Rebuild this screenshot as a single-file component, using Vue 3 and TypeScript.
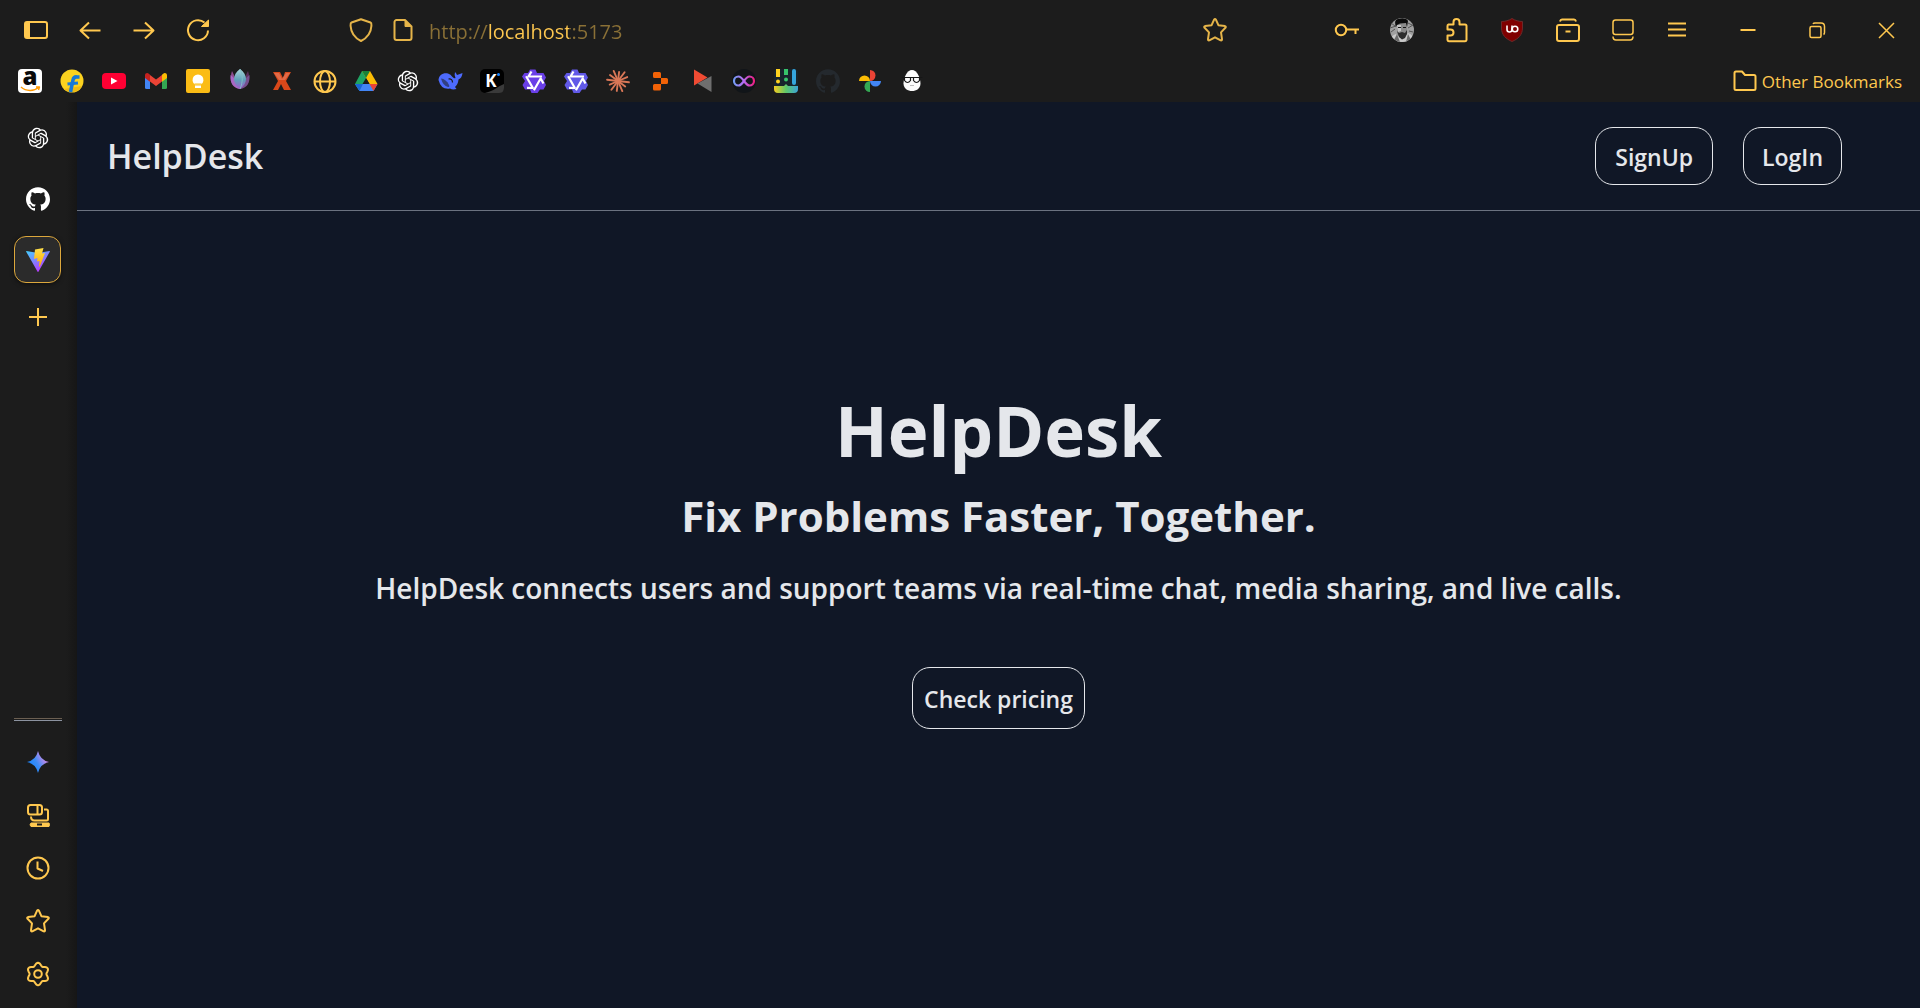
<script setup lang="ts">
import { ref } from 'vue'

const address = ref('http://localhost:5173')

const openAiPath =
  'M22.2819 9.8211a5.9847 5.9847 0 0 0-.5157-4.9108 6.0462 6.0462 0 0 0-6.5098-2.9A6.0651 6.0651 0 0 0 4.9807 4.1818a5.9847 5.9847 0 0 0-3.9977 2.9 6.0462 6.0462 0 0 0 .7427 7.0966 5.98 5.98 0 0 0 .511 4.9107 6.051 6.051 0 0 0 6.5146 2.9001A5.9847 5.9847 0 0 0 13.2599 24a6.0557 6.0557 0 0 0 5.7718-4.2058 5.9894 5.9894 0 0 0 3.9977-2.9001 6.0557 6.0557 0 0 0-.7475-7.0729zm-9.022 12.6081a4.4755 4.4755 0 0 1-2.8764-1.0408l.1419-.0804 4.7783-2.7582a.7948.7948 0 0 0 .3927-.6813v-6.7369l2.02 1.1686a.071.071 0 0 1 .038.052v5.5826a4.504 4.504 0 0 1-4.4945 4.4944zm-9.6607-4.1254a4.4708 4.4708 0 0 1-.5346-3.0137l.142.0852 4.783 2.7582a.7712.7712 0 0 0 .7806 0l5.8428-3.3685v2.3324a.0804.0804 0 0 1-.0332.0615L9.74 19.9502a4.4992 4.4992 0 0 1-6.1408-1.6464zM2.3408 7.8956a4.485 4.485 0 0 1 2.3655-1.9728V11.6a.7664.7664 0 0 0 .3879.6765l5.8144 3.3543-2.0201 1.1685a.0757.0757 0 0 1-.071 0l-4.8303-2.7865A4.504 4.504 0 0 1 2.3408 7.872zm16.5963 3.8558L13.1038 8.364 15.1192 7.2a.0757.0757 0 0 1 .071 0l4.8303 2.7913a4.4944 4.4944 0 0 1-.6765 8.1042v-5.6772a.79.79 0 0 0-.407-.667zm2.0107-3.0231l-.142-.0852-4.7735-2.7818a.7759.7759 0 0 0-.7854 0L9.409 9.2297V6.8974a.0662.0662 0 0 1 .0284-.0615l4.8303-2.7866a4.4992 4.4992 0 0 1 6.6802 4.66zM8.3065 12.863l-2.02-1.1638a.0804.0804 0 0 1-.038-.0567V6.0742a4.4992 4.4992 0 0 1 7.3757-3.4537l-.142.0805L8.704 5.459a.7948.7948 0 0 0-.3927.6813zm1.0976-2.3654l2.602-1.4998 2.6069 1.4998v2.9994l-2.5974 1.4997-2.6067-1.4997Z'
const gitHubPath =
  'M12 .297c-6.63 0-12 5.373-12 12 0 5.303 3.438 9.8 8.205 11.385.6.113.82-.258.82-.577 0-.285-.01-1.04-.015-2.04-3.338.724-4.042-1.61-4.042-1.61C4.422 18.07 3.633 17.7 3.633 17.7c-1.087-.744.084-.729.084-.729 1.205.084 1.838 1.236 1.838 1.236 1.07 1.835 2.809 1.305 3.495.998.108-.776.417-1.305.76-1.605-2.665-.3-5.466-1.332-5.466-5.93 0-1.31.465-2.38 1.235-3.22-.135-.303-.54-1.523.105-3.176 0 0 1.005-.322 3.3 1.23.96-.267 1.98-.399 3-.405 1.02.006 2.04.138 3 .405 2.28-1.552 3.285-1.23 3.285-1.23.645 1.653.24 2.873.12 3.176.765.84 1.23 1.91 1.23 3.22 0 4.61-2.805 5.625-5.475 5.92.42.36.81 1.096.81 2.22 0 1.606-.015 2.896-.015 3.286 0 .315.21.69.825.57C20.565 22.092 24 17.592 24 12.297c0-6.627-5.373-12-12-12'
const starPath =
  'M11.1 1.6Q12 .4 12.9 1.6L15.4 7.2 22 8.1Q23.4 8.5 22.4 9.8L18 14.4 19 21.2Q19.1 22.7 17.7 22.3L12 19.3 6.3 22.3Q4.9 22.7 5 21.2L6 14.4 1.6 9.8Q.6 8.5 2 8.1L8.6 7.2Z'

/* Six-lobed outline of the settings cog */
const cogPath =
  Array.from({ length: 72 }, (_, i) => {
    const angle = (i / 72) * Math.PI * 2
    const radius = 9.8 + 1.4 * Math.cos(angle * 6)
    const x = 12 + radius * Math.sin(angle)
    const y = 12 - radius * Math.cos(angle)
    return `${i === 0 ? 'M' : 'L'}${x.toFixed(2)} ${y.toFixed(2)}`
  }).join('') + 'Z'

/* Rays of the sunburst bookmark */
const rays = [11, 9, 11, 10, 11, 9, 11, 10, 11, 9, 11, 10].map((length, i) => {
  const angle = (i / 12) * Math.PI * 2 + 0.12
  return { x: 12 + length * Math.cos(angle), y: 12 + length * Math.sin(angle) }
})
</script>

<template>
  <div class="browser">
    <header class="chrome">
      <div class="toolbar">
        <nav class="group nav-group" aria-label="Navigation">
          <button class="icon" aria-label="Toggle sidebar">
            <svg viewBox="0 0 24 24"><rect x="1" y="4" width="22" height="16" rx="2" /><path d="M1.500 5h4v14h-4z" class="solid" /></svg>
          </button>
          <button class="icon" aria-label="Back">
            <svg viewBox="0 0 24 24"><path d="M22.500 12.500H2.500M11 4.500l-8.500 8 8.500 8" /></svg>
          </button>
          <button class="icon" aria-label="Forward">
            <svg viewBox="0 0 24 24"><path d="M1.500 12.500h20M13 4.500l8.500 8-8.500 8" /></svg>
          </button>
          <button class="icon" aria-label="Reload">
            <svg viewBox="0 0 24 24"><path d="M22 12.500A10 10 0 1 1 18.500 4.600" /><path d="M22.500 2v6.500h-7z" class="solid" /></svg>
          </button>
        </nav>

        <div class="address">
          <div class="group site-group">
            <button class="icon" aria-label="Tracking protection">
              <svg viewBox="0 0 24 24" class="soft"><path d="M12 1.200L21.500 4.500C22.700 5 22.500 6 22.400 8 22 15 18 20 12 23 6 20 2 15 1.600 8 1.500 6 1.300 5 2.500 4.500Z" /></svg>
            </button>
            <button class="icon" aria-label="Site information">
              <svg viewBox="0 0 24 24" class="soft"><path d="M5.500 2H14l6.500 6.500V20a2 2 0 0 1-2 2H5.500a2 2 0 0 1-2-2V4a2 2 0 0 1 2-2z" /><path d="M14 2v6.500h6.500z" class="solid" /></svg>
            </button>
          </div>
          <input v-model="address" class="url" type="text" aria-label="Address" spellcheck="false" />
          <button class="icon" aria-label="Bookmark this page">
            <svg viewBox="0 0 24 24" class="soft"><path :d="starPath" /></svg>
          </button>
        </div>

        <div class="group tool-group">
          <button class="icon" aria-label="Passwords">
            <svg viewBox="0 0 24 24"><circle cx="6" cy="12" r="5.200" /><path d="M11.200 11.500H24M20.500 11.500v4.500" /></svg>
          </button>
          <button class="icon" aria-label="Account">
            <svg viewBox="0 0 24 24" class="plain">
              <clipPath id="avatar"><circle cx="12" cy="12" r="12" /></clipPath>
              <g clip-path="url(#avatar)">
                <rect width="24" height="24" fill="#a0a0a0" />
                <path d="M1 5l4 3M0 10l6-2M1 14l4-3M18 5l4 2M18 10l5-3M19 13l4 1" stroke="#555" />
                <path d="M0 24c0-5 3-7 6-8l6 5 6-6c3 1 6 3 6 9z" fill="#c9c9c9" />
                <path d="M3 24l4-8 3 8zM16 24l2-8 3 6z" fill="#6b6b6b" />
                <path d="M7 5h10v8c0 4-2 7-5 7s-5-3-5-7z" fill="#8b8b8b" />
                <path d="M7 7h4v6l-3 1z" fill="#c4c4c4" />
                <path d="M6 9C5 6 4 2 8 1c4-1.500 9-1 10 2l-1 6-1-4-6 .5L7 7z" fill="#0b0b0b" />
                <path d="M7 13l2 2 3-1 3 1 2-3v4l-2 4-3 1.500L9 19z" fill="#2e2e2e" />
                <path d="M8 9.500h3M13 9.500h3" stroke="#161616" />
              </g>
            </svg>
          </button>
          <button class="icon" aria-label="Extensions">
            <svg viewBox="0 0 24 24"><path d="M3.500 6.500H8.500V4a3 3 0 0 1 6 0V6.500H20a1.500 1.500 0 0 1 1.500 1.500V22A1.500 1.500 0 0 1 20 23.200H4A1.500 1.500 0 0 1 2.500 22V17.500H5.500a3 3 0 0 0 0-6H2.500V8a1.500 1.500 0 0 1 1-1.500z" /></svg>
          </button>
          <button class="icon" aria-label="uBlock Origin">
            <svg viewBox="0 0 24 24" class="plain">
              <path d="M12 .500C15 2.500 19 3.500 22.500 3.500V10C22.500 17 18 21 12 23.500 6 21 1.500 17 1.500 10V3.500C5 3.500 9 2.500 12 .500Z" fill="#800000" stroke="#6b2a2a" />
              <path d="M7 7.500v4a2.500 2.500 0 0 0 5 0v-1" fill="none" stroke="#fff" stroke-width="1.600" />
              <circle cx="15" cy="11" r="2.800" fill="none" stroke="#fff" stroke-width="1.600" />
              <path d="M12 7.500v4" stroke="#fff" stroke-width="1.600" />
            </svg>
          </button>
          <button class="icon" aria-label="Library">
            <svg viewBox="0 0 24 24"><rect x="2" y="7" width="22" height="16" rx="2" /><path d="M5 3.500q.5-2 2-2h12q1.500 0 2 2M10.500 13.500h5" /></svg>
          </button>
          <button class="icon" aria-label="Split view">
            <svg viewBox="0 0 24 24" class="thin"><rect x="3" y="2" width="20" height="14.500" rx="2.500" /><path d="M3 18.500q0 3.500 3 3.500h14q3 0 3-3.500" /></svg>
          </button>
          <button class="icon" aria-label="Menu">
            <svg viewBox="0 0 24 24"><path d="M3 5.500h18M3 11.500h18M3 17.500h18" /></svg>
          </button>
        </div>

        <div class="group window-group">
          <button class="icon" aria-label="Minimize">
            <svg viewBox="0 0 24 24"><path d="M4.500 12h15" /></svg>
          </button>
          <button class="icon" aria-label="Restore">
            <svg viewBox="0 0 24 24" class="thin"><rect x="5" y="8.500" width="11" height="11" rx="1.500" /><path d="M8 6q.5-1 2-1h6q3.500 0 3.500 3.500v6q0 1.500-1 2" /></svg>
          </button>
          <button class="icon" aria-label="Close">
            <svg viewBox="0 0 24 24" class="thin"><path d="M5 5l15 15M20 5L5 20" /></svg>
          </button>
        </div>
      </div>

      <nav class="bookmarks" aria-label="Bookmarks">
        <a class="icon" href="#" aria-label="Amazon">
          <svg viewBox="0 0 24 24" class="plain">
            <rect width="24" height="24" rx="4" fill="#fff" />
            <text x="12" y="16" text-anchor="middle" font-size="24" font-weight="800" fill="#0a0a0a">a</text>
            <path d="M3 18c5 4.500 13 4.500 17.500.5M18 18h3.500l-1 3" fill="none" stroke="#f90" stroke-width="1.400" />
          </svg>
        </a>
        <a class="icon" href="#" aria-label="Flipkart">
          <svg viewBox="0 0 24 24" class="plain">
            <circle cx="12" cy="12" r="11.500" fill="#fbd21f" />
            <path d="M4 20a11.500 11.500 0 0 0 18-3z" fill="#eeb912" />
            <path d="M10.500 23l2.500-12q.8-3.500 4-3h2.500" fill="none" stroke="#1679d8" stroke-width="3.600" />
            <path d="M7.500 15l10.500-1" stroke="#1679d8" stroke-width="3" />
          </svg>
        </a>
        <a class="icon" href="#" aria-label="YouTube">
          <svg viewBox="0 0 24 24" class="plain"><rect y="4" width="24" height="16" rx="4" fill="#ff0033" /><path d="M9 8.500v7l6.500-3.500z" fill="#fff" /></svg>
        </a>
        <a class="icon" href="#" aria-label="Gmail">
          <svg viewBox="0 0 24 24" class="plain">
            <path d="M1 6v12.500q0 1.500 1.500 1.500H6V10z" fill="#4285f4" />
            <path d="M23 6v12.500q0 1.500-1.500 1.500H18V10z" fill="#34a853" />
            <path d="M6 12.500V6l6 4.500L18 6v6.500L12 17z" fill="#ea4335" />
            <path d="M1 9V6.500C1 4 3.500 3.500 4.800 4.700L6 5.700v7z" fill="#c5221f" />
            <path d="M23 9V6.500c0-2.500-2.500-3-3.800-1.800L18 5.700v7z" fill="#fbbc04" />
          </svg>
        </a>
        <a class="icon" href="#" aria-label="Google Keep">
          <svg viewBox="0 0 24 24" class="plain"><rect width="24" height="24" rx="2" fill="#fbbc15" /><path d="M9 15.500A5.500 5.500 0 1 1 15 15.500zM9 16.500h6v2.500H9z" fill="#fff" /><path d="M8.500 15h7" stroke="#fbbc15" /></svg>
        </a>
        <a class="icon" href="#" aria-label="Lotus">
          <svg viewBox="0 0 24 24" class="plain">
            <defs><linearGradient id="petal" x1="0" y1="0" x2="0" y2="1"><stop offset="0" stop-color="#a9d8da" /><stop offset=".55" stop-color="#5fa0b8" /><stop offset="1" stop-color="#a05bd0" /></linearGradient></defs>
            <path d="M4 2c-2 7-3 14 8 18C8 14 7 7 4 2z" fill="#8d4c8e" />
            <path d="M20 2c2 7 3 14-8 18 4-6 5-13 8-18z" fill="#5b2f5c" />
            <path d="M2.500 6C2 14 5 19 12 20 9 14 7 9 2.500 6z" fill="#a968c4" />
            <path d="M21.500 6C22 14 19 19 12 20c3-6 5-11 9.500-14z" fill="#77508f" />
            <path d="M12 0c8 6 8 14 0 20C4 14 4 6 12 0z" fill="url(#petal)" />
            <path d="M12 0c3 6 3 13 0 20" fill="none" stroke="#82bdc6" />
          </svg>
        </a>
        <a class="icon" href="#" aria-label="X">
          <svg viewBox="0 0 24 24" class="plain">
            <path d="M3 3h7l3 6 2-6h6l-5 9 5 9h-7l-3-6-3 6H3l5-9z" fill="#d9481a" />
            <path d="M4 4h5l3 6 4-6h4l-5 7H9z" fill="#e06a48" />
          </svg>
        </a>
        <a class="icon" href="#" aria-label="Web">
          <svg viewBox="0 0 24 24"><circle cx="13" cy="12.500" r="10.500" /><ellipse cx="13" cy="12.500" rx="5" ry="10.500" /><path d="M2.500 12.500h21" /></svg>
        </a>
        <a class="icon" href="#" aria-label="Google Drive">
          <svg viewBox="0 0 24 24" class="plain">
            <path d="M8 2h4l2.500 4.500L5.500 22 1 15z" fill="#1fa463" />
            <path d="M8 2h8l7.500 13h-8z" fill="#fbbc04" />
            <path d="M8 2h8l-4 7z" fill="#188038" />
            <path d="M1 15h22.500l-4 7h-14z" fill="#4285f4" />
            <path d="M15.500 15h8l-4 7z" fill="#ea4335" />
            <path d="M1 15h8l-3.500 7z" fill="#1967d2" />
            <path d="M12 9l3.500 6h-7z" fill="#1c1c1c" />
          </svg>
        </a>
        <a class="icon" href="#" aria-label="ChatGPT">
          <svg viewBox="-2 -2 28 28" class="plain"><path :d="openAiPath" fill="#fff" /></svg>
        </a>
        <a class="icon" href="#" aria-label="DeepSeek">
          <svg viewBox="0 0 24 24" class="plain">
            <path d="M.500 11C1 6 5 3.500 10 4.500q3 1 4 3 2 2.500 3.500 1.500-1.500-3-.5-6 1.200 1 2 3 3-1 5.500-2-.5 5-4 6.500-.5 5-3.500 7.500l1.500 2q-4 1-6.500-.5Q3 21 .500 11z" fill="#4d6bfe" />
            <path d="M3 9.500q5 .5 8 6.500 1 2-1 2-5-1-7-8.500z" fill="#1c1c1c" opacity=".55" />
            <path d="M10.500 10q4-.5 4 3.500" fill="none" stroke="#1c1c1c" stroke-width="1.200" />
          </svg>
        </a>
        <a class="icon" href="#" aria-label="Kimi">
          <svg viewBox="0 0 24 24" class="plain">
            <rect width="24" height="24" rx="5" fill="#000" />
            <path d="M5 24q7-2 10-4 4-3 9-5v4q0 5-5 5z" fill="#3a3a3a" />
            <text x="11" y="18" text-anchor="middle" font-size="17" font-weight="700" fill="#fff">K</text>
            <circle cx="18.500" cy="5.500" r="1.500" fill="#1783ff" />
          </svg>
        </a>
        <a v-for="tone in ['#6a3fe8', '#6159e8']" :key="tone" class="icon" href="#" aria-label="Qwen">
          <svg viewBox="0 0 24 24" class="plain">
            <path d="M8 .500h5.500L15 4h6.500l2.500 4.500-2 3.500 2 4-2.500 4.500H18L15.500 24h-6L8 20.500H3L.500 16 3 12 0 7.500 2.500 4h3.500z" :fill="tone" />
            <path d="M9.500 2.500L6.500 7.500H20" fill="none" stroke="#fff" stroke-width="2.200" />
            <path d="M9.500 2.500L6.500 7.500H20" fill="none" stroke="#fff" stroke-width="2.200" transform="rotate(120 12 12)" />
            <path d="M9.500 2.500L6.500 7.500H20" fill="none" stroke="#fff" stroke-width="2.200" transform="rotate(240 12 12)" />
          </svg>
        </a>
        <a class="icon" href="#" aria-label="Claude">
          <svg viewBox="0 0 24 24" class="plain">
            <line v-for="(ray, i) in rays" :key="i" x1="12" y1="12" :x2="ray.x" :y2="ray.y" stroke="#d97757" stroke-width="1.900" stroke-linecap="round" />
          </svg>
        </a>
        <a class="icon" href="#" aria-label="Replit">
          <svg viewBox="0 0 24 24" class="plain"><path d="M6.500 3h5q1.500 0 1.500 1.500V9H6.500Q5 9 5 7.500v-3Q5 3 6.500 3zM13 9h5.500q1.500 0 1.500 1.500v3q0 1.500-1.500 1.500H13zM6.500 15H13v5q0 1.500-1.500 1.500h-5Q5 21.500 5 20v-3.500Q5 15 6.500 15z" fill="#f26207" /></svg>
        </a>
        <a class="icon" href="#" aria-label="Player">
          <svg viewBox="0 0 24 24" class="plain"><path d="M4 .500v16L17.500 8.500z" fill="#f04b33" /><path d="M21.500 7v16L7.500 14.500z" fill="#6f6f6f" /></svg>
        </a>
        <a class="icon" href="#" aria-label="Infinity">
          <svg viewBox="0 0 24 24" class="plain">
            <defs><linearGradient id="loop" gradientUnits="userSpaceOnUse" x1="1" y1="0" x2="23" y2="0"><stop offset="0" stop-color="#6ea0f5" /><stop offset=".5" stop-color="#b86af0" /><stop offset="1" stop-color="#f01878" /></linearGradient></defs>
            <circle cx="12" cy="12" r="12" fill="#111519" />
            <path d="M12 12C9.500 8.500 8.500 7.500 6.500 7.500a4.500 4.500 0 0 0 0 9c2 0 3-1 5.500-4.500s3.500-4.500 5.500-4.500a4.500 4.500 0 0 1 0 9c-2 0-3-1-5.500-4.500z" fill="none" stroke="url(#loop)" stroke-width="2.200" />
          </svg>
        </a>
        <a class="icon" href="#" aria-label="Paint">
          <svg viewBox="0 0 24 24" class="plain">
            <defs><linearGradient id="paint"><stop offset="0" stop-color="#f5cc20" /><stop offset=".5" stop-color="#5ec76a" /><stop offset="1" stop-color="#3ba3d8" /></linearGradient></defs>
            <rect width="24" height="24" rx="4" fill="#17242c" />
            <path d="M0 17h10l2-2 2 2h10v3q0 4-4 4H4q-4 0-4-4z" fill="url(#paint)" />
            <path d="M4 0v8" stroke="#ffd21f" stroke-width="4" /><circle cx="4" cy="12.500" r="2" fill="#ffd21f" />
            <path d="M12 0v6" stroke="#36c46a" stroke-width="4" /><circle cx="12" cy="10.500" r="2" fill="#36c46a" />
            <path d="M20 2v12" stroke="#35a5dd" stroke-width="4" stroke-linecap="round" />
          </svg>
        </a>
        <a class="icon" href="#" aria-label="GitHub">
          <svg viewBox="0 0 24 24" class="plain"><path :d="gitHubPath" fill="#24292e" /></svg>
        </a>
        <a class="icon" href="#" aria-label="Google Photos">
          <svg viewBox="0 0 24 24" class="plain">
            <path d="M12 1a5.500 5.500 0 0 1 0 11z" fill="#ea4335" />
            <path d="M23 12a5.500 5.500 0 0 1-11 0z" fill="#4285f4" />
            <path d="M12 23a5.500 5.500 0 0 1 0-11z" fill="#34a853" />
            <path d="M1 12a5.500 5.500 0 0 1 11 0z" fill="#fbbc04" />
          </svg>
        </a>
        <a class="icon" href="#" aria-label="Egghead">
          <svg viewBox="0 0 24 24" class="plain">
            <path d="M12 1c5 0 8.500 8 8.500 13.500 0 10-17 10-17 0C3.500 9 7 1 12 1z" fill="#fbfbfb" />
            <path d="M1.500 8.500h21M4.500 9v2.500q3 4 6 0V9M13.500 9v2.500q3 4 6 0V9" fill="none" stroke="#161616" stroke-width="1.200" />
            <path d="M10 16.500h4" stroke="#bbb" />
          </svg>
        </a>
        <a class="other" href="#">
          <svg viewBox="0 0 24 24"><path d="M3 2.500h6L12 6h9q1.500 0 1.500 1.500v12q0 1.500-1.500 1.500H3q-1.500 0-1.500-1.500V4Q1.500 2.500 3 2.500z" /></svg>
          <span>Other Bookmarks</span>
        </a>
      </nav>
    </header>

    <div class="body">
      <aside class="sidebar">
        <div class="tabs">
          <button class="tab" aria-label="ChatGPT tab">
            <svg viewBox="-2 -2 28 28" class="plain"><path :d="openAiPath" fill="#fff" /></svg>
          </button>
          <button class="tab" aria-label="GitHub tab">
            <svg viewBox="0 0 24 24" class="plain"><path :d="gitHubPath" fill="#fff" /></svg>
          </button>
          <button class="tab active" aria-label="HelpDesk tab">
            <svg viewBox="0 0 24 24" class="plain">
              <defs>
                <linearGradient id="vite" x1="0" y1="0" x2=".6" y2="1"><stop offset="0" stop-color="#41d1ff" /><stop offset="1" stop-color="#bd34fe" /></linearGradient>
                <linearGradient id="bolt" x1="0" y1="0" x2="0" y2="1"><stop offset="0" stop-color="#ffe04a" /><stop offset="1" stop-color="#ffa800" /></linearGradient>
              </defs>
              <path d="M.500 3L12 5l11.500-2q.6 0 .3.700L12.400 23.700q-.4.500-.8 0L.200 3.700Q0 3 .500 3z" fill="url(#vite)" />
              <path d="M9 1.500L17.500 0l-1.500 5.500 3-.5-5 13-1 1 .5-6-2.500.5.500-3.500L8 11z" fill="url(#bolt)" />
            </svg>
          </button>
          <button class="tab new-tab" aria-label="New tab">
            <svg viewBox="0 0 24 24"><path d="M12 3v18M3 12h18" /></svg>
          </button>
        </div>
        <div class="tools">
          <hr class="divider" />
          <button class="icon" aria-label="Gemini">
            <svg viewBox="0 0 24 24" class="plain">
              <defs><linearGradient id="spark" x1="0" y1=".8" x2="1" y2=".2"><stop offset=".2" stop-color="#1f87ff" /><stop offset=".45" stop-color="#3d8cf5" /><stop offset=".8" stop-color="#c58bea" /></linearGradient></defs>
              <path d="M12 1Q14 10 23 12 14 14 12 23 10 14 1 12 10 10 12 1z" fill="url(#spark)" />
            </svg>
          </button>
          <button class="icon" aria-label="Synced tabs">
            <svg viewBox="0 0 24 24"><rect x="2" y="2" width="14" height="9.500" rx="2.500" /><path d="M11.500 2v9.500M18 6.500h2.500q1.500 0 1.500 1.500v8q0 1.500-1.500 1.500h-12q-3.500 0-3.500-4" /><path d="M5 20h18q1 1.500 0 3.500H5q-2-1.500 0-3.500z" class="solid" /><path d="M11 21.500h5" stroke="#1c1c1c" /></svg>
          </button>
          <button class="icon" aria-label="History">
            <svg viewBox="0 0 24 24"><circle cx="12" cy="12" r="10.500" /><path d="M11.500 5.500v7l5.500 2.500" /></svg>
          </button>
          <button class="icon" aria-label="Bookmarks">
            <svg viewBox="0 0 24 24"><path :d="starPath" /></svg>
          </button>
          <button class="icon" aria-label="Settings">
            <svg viewBox="0 0 24 24"><path :d="cogPath" /><circle cx="12" cy="12" r="3.800" /></svg>
          </button>
        </div>
      </aside>

      <div class="page">
        <header class="page-header">
          <a class="brand" href="#">HelpDesk</a>
          <nav class="account">
            <button class="outline sign">SignUp</button>
            <button class="outline">LogIn</button>
          </nav>
        </header>
        <main class="hero">
          <h1>HelpDesk</h1>
          <h2>Fix Problems Faster, Together.</h2>
          <p>HelpDesk connects users and support teams via real-time chat, media sharing, and live calls.</p>
          <button class="outline pricing">Check pricing</button>
        </main>
      </div>
    </div>
  </div>
</template>

<style>
body {
  margin: 0;
  background: #1c1c1c;
}
</style>

<style scoped>
.browser {
  display: flex;
  flex-direction: column;
  min-height: 100vh;
  background: #1c1c1c;
  color: #ffc84f;
  font-family: 'Open Sans', 'Noto Sans', sans-serif;
}

button,
input {
  margin: 0;
  padding: 0;
  border: 0;
  background: none;
  color: inherit;
  font: inherit;
}

a {
  color: inherit;
  text-decoration: none;
}

svg {
  display: block;
  flex: none;
  width: 24px;
  height: 24px;
  fill: none;
  stroke: #ffc84f;
  stroke-width: 2;
  stroke-linejoin: round;
  overflow: visible;
}

svg.soft {
  stroke: #e5b449;
}

svg.thin {
  stroke-width: 1.5;
}

svg.plain {
  stroke: none;
  stroke-width: 1;
}

.solid {
  fill: #ffc84f;
  stroke-width: 1;
}

.soft .solid {
  fill: #e5b449;
}

.icon {
  flex: none;
  width: 24px;
  height: 24px;
}

.toolbar {
  display: flex;
  align-items: center;
  height: 60px;
  padding: 0 22px 0 24px;
}

.group {
  display: flex;
}

.nav-group {
  gap: 30px;
}

.site-group {
  gap: 18px;
}

.address {
  display: flex;
  flex: 1;
  align-items: center;
  gap: 14px;
  min-width: 0;
  margin: 0 108px 0 139px;
}

.tool-group {
  gap: 31px;
}

.window-group {
  gap: 45px;
  margin-left: 47px;
}

.url {
  flex: 1;
  min-width: 0;
  height: 32px;
  padding-top: 2px;
  font-size: 20px;
  background: linear-gradient(90deg, #8a7036 58px, #ffc84f 58px, #ffc84f 140px, #8a7036 140px);
  background-clip: text;
  -webkit-background-clip: text;
  -webkit-text-fill-color: transparent;
}

.bookmarks {
  display: flex;
  align-items: center;
  gap: 18px;
  height: 42px;
  padding: 0 18px;
}

.other {
  display: flex;
  align-items: center;
  gap: 5px;
  margin-left: auto;
  font-size: 17px;
  white-space: nowrap;
}

.body {
  display: flex;
  flex: 1;
}

.sidebar {
  display: flex;
  flex-direction: column;
  justify-content: space-between;
  box-sizing: border-box;
  width: 77px;
  padding: 12px 2px 22px 0;
  background: linear-gradient(90deg, #1c1c1c 66px, #161616);
}

.tabs,
.tools {
  display: flex;
  flex-direction: column;
  align-items: center;
}

.tabs {
  gap: 14px;
}

.tools {
  gap: 29px;
}

.tab {
  display: flex;
  align-items: center;
  justify-content: center;
  box-sizing: border-box;
  width: 47px;
  height: 47px;
}

.active {
  border: 1px solid #dca73c;
  border-radius: 12px;
  background: #2b2b2b;
  box-shadow: 0 1px 4px #0008;
}

.new-tab {
  height: 40px;
}

.divider {
  box-sizing: border-box;
  width: 48px;
  height: 3px;
  margin: 0;
  border: 0;
  border-top: 1px solid #6b5f52;
  border-bottom: 1px solid #8c93a0;
}

.page {
  display: flex;
  flex: 1;
  flex-direction: column;
  min-width: 0;
  background: #101726;
  color: #e5e7eb;
  font-weight: 600;
}

.page-header {
  display: flex;
  align-items: center;
  justify-content: space-between;
  height: 108px;
  padding: 0 78px 0 30px;
  border-bottom: 1px solid #6b7280;
}

.brand {
  font-size: 34px;
}

.account {
  display: flex;
  gap: 30px;
}

.outline {
  height: 58px;
  padding: 2px 18px 0;
  border: 1px solid #e5e7eb;
  border-radius: 18px;
  font-size: 23px;
}

.sign {
  padding: 2px 19px 0;
}

.hero {
  display: flex;
  flex-direction: column;
  align-items: center;
  padding-top: 183px;
  text-align: center;
}

h1,
h2,
p {
  margin: 0;
}

h1 {
  font-size: 69px;
  line-height: 72px;
}

h2 {
  margin-top: 26px;
  font-size: 42px;
  line-height: 48px;
}

p {
  margin-top: 30px;
  font-size: 28px;
  line-height: 36px;
}

.pricing {
  height: 62px;
  margin-top: 61px;
  padding: 2px 11px 0;
}
</style>
